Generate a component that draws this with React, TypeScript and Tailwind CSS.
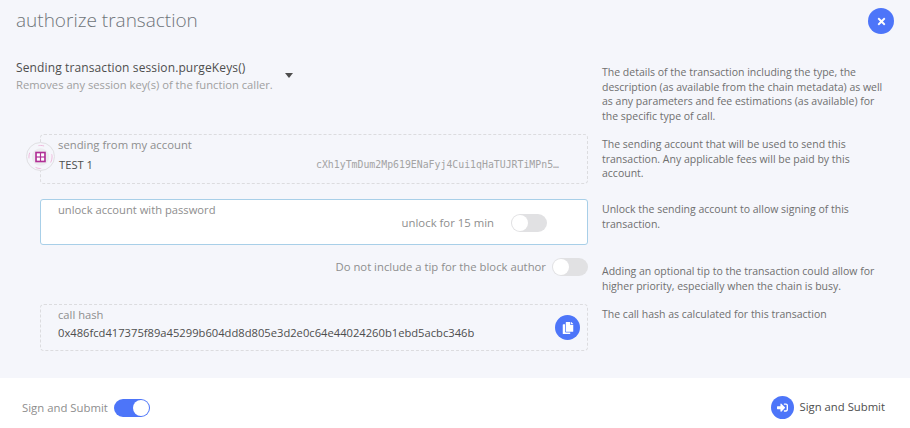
import { FaTimes, FaCopy, FaSignInAlt } from "react-icons/fa";

const font = { fontFamily: '"Open Sans", sans-serif' };

function Toggle({ on = false }: { on?: boolean }) {
  return on ? (
    <div className="flex h-[18px] w-[36px] items-center justify-end rounded-full bg-[#4d75f9] p-px">
      <div className="h-4 w-4 rounded-full bg-white" />
    </div>
  ) : (
    <div className="flex h-[18px] w-[36px] items-center justify-start rounded-full bg-[#e1e1e3] p-px">
      <div className="h-4 w-4 rounded-full bg-white" />
    </div>
  );
}

function Help({ children, className = "" }: { children: React.ReactNode; className?: string }) {
  return (
    <p className={`w-[299px] pl-[14px] text-[10.5px] leading-[14.6px] text-[#6f6f6f] ${className}`}>{children}</p>
  );
}

export default function App() {
  return (
    <div className="flex h-[428px] w-[910px] flex-col overflow-hidden bg-[#f5f6fb] text-[#4e4e4e]" style={font}>
      <header className="flex h-[60px] items-start justify-between pl-4 pr-[16px]">
        <h1 className="pt-[5px] text-[19px] font-light leading-[30px] text-[#6e7479]">authorize transaction</h1>
        <button className="mt-2 flex h-[26px] w-[26px] items-center justify-center rounded-full bg-[#4d75f9] text-white">
          <FaTimes className="h-[11px] w-[11px]" />
        </button>
      </header>

      <main className="flex flex-1 flex-col">
        <section className="flex h-[74px] items-start">
          <div className="flex w-[588px] items-start pl-4">
            <div>
              <div className="text-[12px] leading-[16px] tracking-[0.12px] text-[#4e4e4e]">Sending transaction session.purgeKeys()</div>
              <div className="pt-px text-[11.2px] leading-[15px] text-[#a0a0a0]">Removes any session key(s) of the function caller.</div>
            </div>
            <div className="ml-[12px] mt-[13px] h-0 w-0 border-x-[4px] border-t-[5px] border-x-transparent border-t-[#4e4e4e]" />
          </div>
          <Help className="pt-[5px]">
            The details of the transaction including the type, the description (as available from the chain metadata) as well as any parameters and fee estimations (as available) for the specific type of call.
          </Help>
        </section>

        <section className="flex h-[65px] items-start">
          <div className="w-[588px] pl-10">
            <div className="relative h-[50px] rounded border border-dashed border-[#dcdcdf] pl-[17px]">
              <div className="absolute -left-[15px] top-[7px] flex h-[29px] w-[29px] items-center justify-center rounded-full border border-[#e0e0e3] bg-[#f5f6fb]">
                <svg width="28" height="28" viewBox="0 0 28 28">
                  <circle cx="14" cy="14" r="12" fill="none" stroke="#eeb8dc" strokeWidth="1" strokeDasharray="6 12" />
                  <circle cx="14" cy="14" r="9" fill="#ececef" />
                  <rect x="8.5" y="8.5" width="11" height="11" fill="#b02f96" />
                  <rect x="10.2" y="10.2" width="3.2" height="3.2" fill="#fff" />
                  <rect x="14.6" y="10.2" width="3.2" height="3.2" fill="#fff" />
                  <rect x="10.2" y="14.6" width="3.2" height="3.2" fill="#fff" />
                  <rect x="14.6" y="14.6" width="3.2" height="3.2" fill="#fff" />
                </svg>
              </div>
              <div className="text-[11.3px] leading-[19px] text-[#8e8e8e]">sending from my account</div>
              <div className="flex items-center justify-between pr-[28px] pt-[1px]">
                <span className="pl-px text-[11.2px] leading-[20px] text-[#4e4e4e]">TEST 1</span>
                <span className="text-[9.85px] leading-[20px] text-[#a3a3a3]" style={{ fontFamily: '"DejaVu Sans Mono", monospace' }}>
                  cXh1yTmDum2Mp619ENaFyj4Cui1qHaTUJRTiMPn5…
                </span>
              </div>
            </div>
          </div>
          <Help className="pt-[3px]">
            The sending account that will be used to send this transaction. Any applicable fees will be paid by this account.
          </Help>
        </section>

        <section className="flex h-[59px] items-start">
          <div className="w-[588px] pl-10">
            <div className="h-[46px] rounded-[3px] border border-[#a8cfe8] bg-white pl-[17px]">
              <div className="text-[11.2px] leading-[19px] text-[#8e8e8e]">unlock account with password</div>
              <div className="-mt-[5px] flex items-center justify-end gap-[17px] pr-10">
                <span className="text-[11.35px] leading-[18px] text-[#8e8e8e]">unlock for 15 min</span>
                <Toggle />
              </div>
            </div>
          </div>
          <Help className="pt-[3px]">Unlock the sending account to allow signing of this transaction.</Help>
        </section>

        <section className="flex h-[46px] items-start">
          <div className="flex w-[588px] items-center justify-end gap-[6px]">
            <span className="text-[11.3px] leading-[18px] text-[#8e8e8e]">Do not include a tip for the block author</span>
            <Toggle />
          </div>
          <Help className="pt-[6px]">
            Adding an optional tip to the transaction could allow for higher priority, especially when the chain is busy.
          </Help>
        </section>

        <section className="flex h-[73px] items-start">
          <div className="w-[588px] pl-10">
            <div className="relative h-[47px] rounded border border-dashed border-[#dcdcdf] pl-[17px] pr-[7px]">
              <div className="text-[11.2px] leading-[19px] text-[#8e8e8e]">call hash</div>
              <div className="text-[11.2px] leading-[18px] text-[#4e4e4e]">0x486fcd417375f89a45299b604dd8d805e3d2e0c64e44024260b1ebd5acbc346b</div>
              <button className="absolute right-[7px] top-[10px] flex h-[25px] w-[25px] items-center justify-center rounded-full bg-[#4d75f9] text-white">
                <FaCopy className="h-[12px] w-[12px]" />
              </button>
            </div>
          </div>
          <Help className="pt-[3px]">The call hash as calculated for this transaction</Help>
        </section>
      </main>

      <footer className="flex h-[50px] items-start justify-between bg-white pl-[22px] pr-[25px] pt-[21px]">
        <div className="flex items-center gap-[6px]">
          <span className="text-[11.35px] leading-[18px] text-[#8e8e8e]">Sign and Submit</span>
          <Toggle on />
        </div>
        <button className="-mt-[3px] flex items-center gap-[6px] text-[11.3px] text-[#4e4e4e]">
          <span className="flex h-[23px] w-[23px] items-center justify-center rounded-full bg-[#4d75f9] text-white">
            <FaSignInAlt className="h-[11px] w-[11px]" />
          </span>
          Sign and Submit
        </button>
      </footer>
    </div>
  );
}
